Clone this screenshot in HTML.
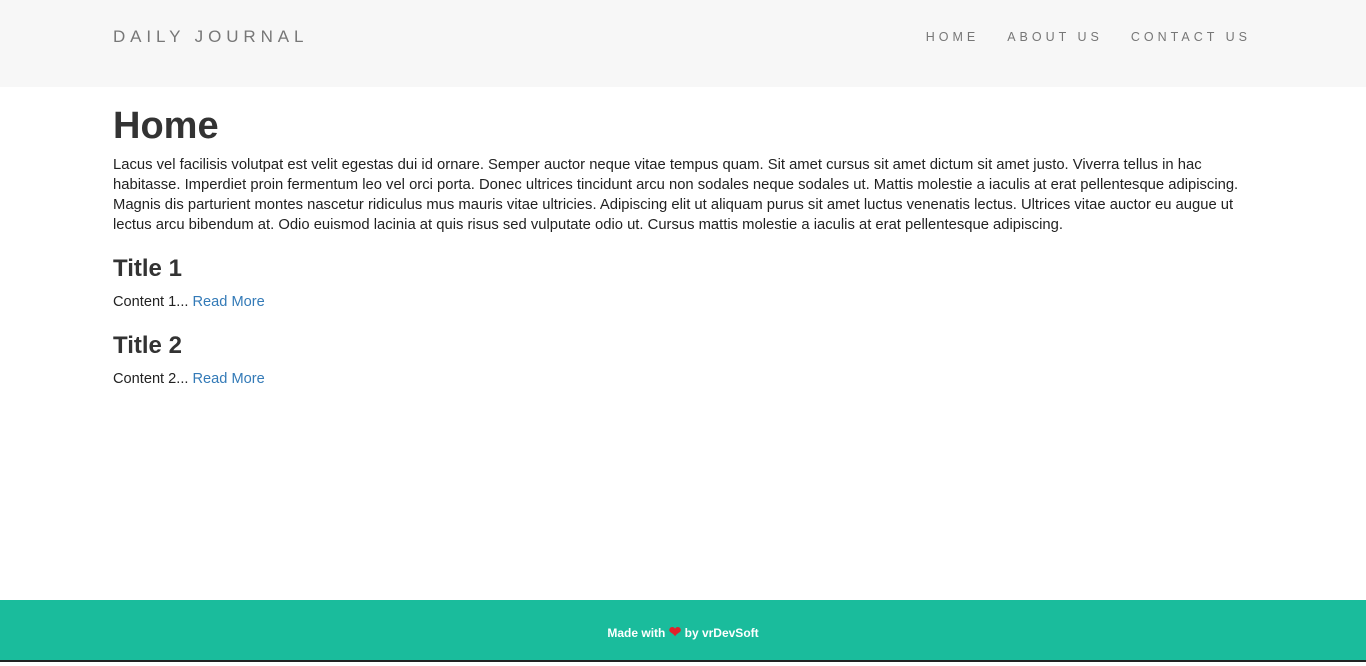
<!DOCTYPE html>
<html><head><meta charset="utf-8"><style>
*{margin:0;padding:0;box-sizing:border-box}
body{width:1366px;height:662px;overflow:hidden;background:#fff;font-family:"Liberation Sans",sans-serif;color:#333;position:relative}
.nav{height:87px;background:#f7f7f7;position:relative}
.brand{position:absolute;left:113px;top:27px;font-size:17px;letter-spacing:4.9px;color:#777}
.links{position:absolute;right:115px;top:30px;font-size:12.5px;letter-spacing:4px;color:#777}
.links span{margin-left:28px}
.c{position:absolute;left:113px;top:103px}
h1{font-size:38px;font-weight:bold;color:#333;line-height:46px}
p.l{font-size:14.8px;line-height:20px;white-space:nowrap;margin-top:6px;color:#222}
h2{font-size:24px;font-weight:bold;margin-top:19px;line-height:30px}
.s{font-size:14.6px;margin-top:10px;color:#222}
.s+h2{margin-top:21px}
a{color:#337ab7;text-decoration:none}
.f{position:absolute;left:0;top:600px;width:1366px;height:60px;background:#1abc9c;color:#fff;font-size:12px;font-weight:bold;text-align:center;line-height:66px}
.b{position:absolute;left:0;top:660px;width:1366px;height:2px;background:#222}
</style></head><body>
<div class="nav"><div class="brand">DAILY JOURNAL</div><div class="links"><span>HOME</span><span>ABOUT US</span><span>CONTACT US</span></div></div>
<div class="c">
<h1>Home</h1>
<p class="l">Lacus vel facilisis volutpat est velit egestas dui id ornare. Semper auctor neque vitae tempus quam. Sit amet cursus sit amet dictum sit amet justo. Viverra tellus in hac<br>habitasse. Imperdiet proin fermentum leo vel orci porta. Donec ultrices tincidunt arcu non sodales neque sodales ut. Mattis molestie a iaculis at erat pellentesque adipiscing.<br>Magnis dis parturient montes nascetur ridiculus mus mauris vitae ultricies. Adipiscing elit ut aliquam purus sit amet luctus venenatis lectus. Ultrices vitae auctor eu augue ut<br>lectus arcu bibendum at. Odio euismod lacinia at quis risus sed vulputate odio ut. Cursus mattis molestie a iaculis at erat pellentesque adipiscing.</p>
<h2>Title 1</h2>
<p class="s">Content 1... <a>Read More</a></p>
<h2>Title 2</h2>
<p class="s">Content 2... <a>Read More</a></p>
</div>
<div class="f">Made with <span style="color:#e0212b;font-size:15px">❤</span> by vrDevSoft</div>
<div class="b"></div>
</body></html>
